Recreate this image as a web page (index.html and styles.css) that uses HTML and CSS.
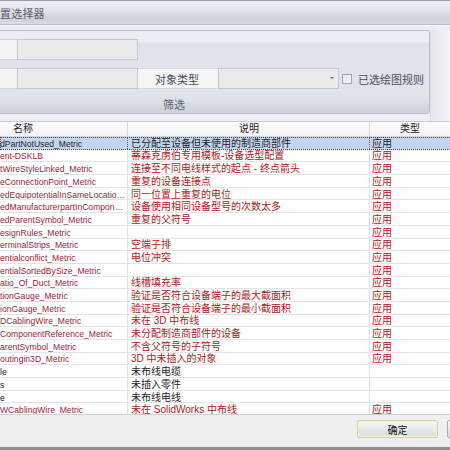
FILE: index.html
```html
<!DOCTYPE html>
<html>
<head>
<meta charset="utf-8">
<link rel="stylesheet" href="styles.css">
</head>
<body>
<div class="win">
  <div class="titlebar"><span class="title">置选择器</span></div>
  <div class="ribbon">
    <div class="group">
      <div class="fields">
        <div class="frow">
          <div class="cell lab1"></div>
          <div class="cell inp"></div>
        </div>
        <div class="frow">
          <div class="cell lab1"></div>
          <div class="cell inp"></div>
          <div class="cell lab2">对象类型</div>
          <div class="cell combo"><span class="arrow"></span></div>
          <div class="chk"><span class="box"></span><span class="chktext">已选绘图规则</span></div>
        </div>
      </div>
      <div class="glabel">筛选</div>
    </div>
    <div class="rside"></div>
  </div>
  <div class="grid">
    <div class="head">
      <div class="hc h1">名称</div>
      <div class="hc h2">说明</div>
      <div class="hc h3">类型</div>
    </div>
    <div class="row sel"><div class="c c1">dPartNotUsed_Metric</div><div class="c c2">已分配至设备但未使用的制造商部件</div><div class="c c3">应用</div></div>
    <div class="row"><div class="c c1">ent-DSKLB</div><div class="c c2">蒂森克虏伯专用模板-设备选型配置</div><div class="c c3">应用</div></div>
    <div class="row"><div class="c c1">tWireStyleLinked_Metric</div><div class="c c2">连接至不同电线样式的起点 - 终点箭头</div><div class="c c3">应用</div></div>
    <div class="row"><div class="c c1">eConnectionPoint_Metric</div><div class="c c2">重复的设备连接点</div><div class="c c3">应用</div></div>
    <div class="row"><div class="c c1">edEquipotentialInSameLocatio…</div><div class="c c2">同一位置上重复的电位</div><div class="c c3">应用</div></div>
    <div class="row"><div class="c c1">edManufacturerpartInCompon…</div><div class="c c2">设备使用相同设备型号的次数太多</div><div class="c c3">应用</div></div>
    <div class="row"><div class="c c1">edParentSymbol_Metric</div><div class="c c2">重复的父符号</div><div class="c c3">应用</div></div>
    <div class="row"><div class="c c1">esignRules_Metric</div><div class="c c2"></div><div class="c c3">应用</div></div>
    <div class="row"><div class="c c1">erminalStrips_Metric</div><div class="c c2">空端子排</div><div class="c c3">应用</div></div>
    <div class="row"><div class="c c1">entialconflict_Metric</div><div class="c c2">电位冲突</div><div class="c c3">应用</div></div>
    <div class="row"><div class="c c1">entialSortedBySize_Metric</div><div class="c c2"></div><div class="c c3">应用</div></div>
    <div class="row"><div class="c c1">atio_Of_Duct_Metric</div><div class="c c2">线槽填充率</div><div class="c c3">应用</div></div>
    <div class="row"><div class="c c1">tionGauge_Metric</div><div class="c c2">验证是否符合设备端子的最大截面积</div><div class="c c3">应用</div></div>
    <div class="row"><div class="c c1">ionGauge_Metric</div><div class="c c2">验证是否符合设备端子的最小截面积</div><div class="c c3">应用</div></div>
    <div class="row"><div class="c c1">DCablingWire_Metric</div><div class="c c2">未在 3D 中布线</div><div class="c c3">应用</div></div>
    <div class="row"><div class="c c1">ComponentReference_Metric</div><div class="c c2">未分配制造商部件的设备</div><div class="c c3">应用</div></div>
    <div class="row"><div class="c c1">arentSymbol_Metric</div><div class="c c2">不含父符号的子符号</div><div class="c c3">应用</div></div>
    <div class="row"><div class="c c1">outingin3D_Metric</div><div class="c c2">3D 中未插入的对象</div><div class="c c3">应用</div></div>
    <div class="row blk"><div class="c c1">le</div><div class="c c2">未布线电缆</div><div class="c c3"></div></div>
    <div class="row blk"><div class="c c1">s</div><div class="c c2">未插入零件</div><div class="c c3"></div></div>
    <div class="row blk"><div class="c c1">e</div><div class="c c2">未布线电线</div><div class="c c3"></div></div>
    <div class="row"><div class="c c1">WCablingWire_Metric</div><div class="c c2">未在 SolidWorks 中布线</div><div class="c c3">应用</div></div>
  </div>
  <div class="footer">
    <div class="btn ok">确定</div>
    <div class="btn b2"></div>
  </div>
</div>
</body>
</html>
```
FILE: styles.css
```css
html, body {
  margin: 0;
  padding: 0;
  width: 450px;
  height: 450px;
  overflow: hidden;
  background: #eef0f4;
  font-family: "Liberation Sans", "Noto Sans CJK SC", sans-serif;
}

.win {
  width: 450px;
  height: 450px;
  box-sizing: border-box;
  border-top: 1px solid #9c9c9c;
  display: flex;
  flex-direction: column;
  overflow: hidden;
}

.titlebar {
  height: 23px;
  flex: none;
  background: linear-gradient(#eff1f4 0%, #e6e9ed 30%, #cdd2da 80%, #d9dde3 100%);
  border-bottom: 1px solid #b8bdc6;
  display: flex;
  align-items: center;
}

.title {
  font-size: 11px;
  color: #5a606c;
  margin-left: 0;
  margin-top: 1px;
  letter-spacing: 0.2px;
}

.ribbon {
  height: 96px;
  flex: none;
  box-sizing: border-box;
  padding-top: 4px;
  display: flex;
  background: #eceef2;
  border-top: 1px solid #f7f8fa;
}

.group {
  width: 430px;
  height: 84px;
  flex: none;
  box-sizing: border-box;
  border: 1px solid #bcc1c9;
  border-left: none;
  border-radius: 0 3px 3px 0;
  background: linear-gradient(#eaedf1 0, #eaedf1 11px, #dfe3ea 13px, #dfe3ea 100%);
  display: flex;
  flex-direction: column;
  overflow: hidden;
}

.fields {
  padding-top: 8px;
  display: flex;
  flex-direction: column;
  gap: 8px;
}

.frow {
  height: 21px;
  display: flex;
  align-items: stretch;
}

.cell {
  box-sizing: border-box;
  height: 21px;
}

.lab1 {
  width: 17px;
  background: #f4f4f4;
  border-top: 1px solid #d2d4d8;
  border-bottom: 1px solid #d2d4d8;
}

.inp {
  width: 121px;
  background: #ebebeb;
  border: 1px solid #c5c7cb;
}

.lab2 {
  width: 80px;
  background: #f5f5f5;
  border-top: 1px solid #d6d8dc;
  border-bottom: 1px solid #d6d8dc;
  font-size: 11px;
  color: #454c58;
  display: flex;
  align-items: center;
  justify-content: center;
  padding-right: 2px;
}

.combo {
  width: 121px;
  background: #ebebeb;
  border: 1px solid #c5c7cb;
  display: flex;
  align-items: center;
  justify-content: flex-end;
  padding-right: 4px;
}

.arrow {
  width: 0;
  height: 0;
  border-left: 2px solid transparent;
  border-right: 2px solid transparent;
  border-top: 2px solid #6a6e76;
  margin-bottom: 1px;
}

.chk {
  display: flex;
  align-items: center;
  margin-left: 3px;
}

.box {
  width: 8px;
  height: 8px;
  border: 1px solid #9ea3ab;
  background: linear-gradient(135deg, #e0e3e8, #f7f8fa);
  box-shadow: inset 0 0 0 1px #f2f3f5;
}

.chktext {
  margin-left: 6px;
  font-size: 11px;
  color: #4a505c;
}

.glabel {
  margin-top: auto;
  height: 16px;
  line-height: 16px;
  background: linear-gradient(#dfe3ea, #cdd2da);
  font-size: 11px;
  color: #5a6170;
  padding-left: 163px;
}

.rside {
  flex: 1;
  background: linear-gradient(90deg, #e4e8ed, #f2f4f7);
  border-left: 1px solid #d9dde3;
}

.grid {
  flex: 1;
  background: #ffffff;
  border-top: 1px solid #c8cbd0;
  overflow: hidden;
  width: 480px;
}

.head {
  height: 15px;
  box-sizing: border-box;
  display: grid;
  grid-template-columns: 128px 242px 110px;
  background: linear-gradient(#ffffff, #f0f1f3);
  border-bottom: 1px solid #d3d5d9;
}

.hc {
  font-size: 10px;
  color: #222;
  line-height: 14px;
  border-right: 1px solid #d6d8dc;
}

.h1 {
  padding-left: 13px;
}

.h2 {
  padding-left: 111px;
}

.h3 {
  padding-left: 30px;
}

.row {
  height: 12.7px;
  box-sizing: border-box;
  display: grid;
  grid-template-columns: 128px 242px 110px;
  border-bottom: 1px solid #e4e4e4;
  color: #ae2020;
}

.c {
  border-right: 1px solid #e2e2e2;
  white-space: nowrap;
  overflow: hidden;
  font-size: 10px;
  line-height: 12px;
  padding-top: 0.8px;
  box-sizing: border-box;
}

.c1 {
  font-size: 8.6px;
  color: #9c2436;
  padding-left: 0;
}

.c2 {
  padding-left: 3px;
}

.c3 {
  padding-left: 2px;
}

.sel {
  background: #c4d6ee;
  outline: 1px dotted #404040;
  outline-offset: -1px;
  color: #1e1e28;
}

.sel .c1 {
  color: #1e1e28;
}

.sel .c {
  border-right: 1px dotted #606060;
}

.blk .c1,
.blk .c2 {
  color: #222;
}

.footer {
  height: 36px;
  flex: none;
  box-sizing: border-box;
  background: #efefef;
  border-top: 1px solid #cfcfcf;
  border-bottom: 3px solid #8c8c8c;
  display: flex;
  align-items: flex-start;
  padding-top: 5px;
  padding-left: 357px;
  gap: 9px;
}

.btn {
  height: 18px;
  box-sizing: border-box;
  flex: none;
  font-size: 10px;
  color: #111;
  display: flex;
  align-items: center;
  justify-content: center;
  border-radius: 2px;
  background: linear-gradient(#f7f8f9, #e6e9ec 50%, #d9dde2);
}

.ok {
  width: 81px;
  border: 1px solid #dcd28a;
  box-shadow: inset 0 0 0 1px #f6f2d0;
}

.b2 {
  width: 40px;
  border: 1px solid #a8abb0;
}
```
